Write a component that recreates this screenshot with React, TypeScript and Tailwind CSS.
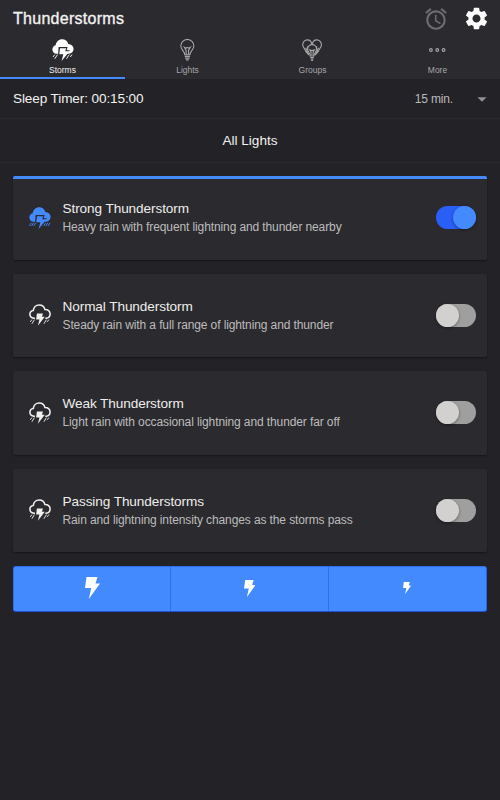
import { MdAlarm, MdArrowDropDown, MdSettings } from "react-icons/md";

type IconProps = { className?: string };

type Storm = {
  id: string;
  name: string;
  description: string;
  active: boolean;
};

const storms: Storm[] = [
  {
    id: "strong",
    name: "Strong Thunderstorm",
    description: "Heavy rain with frequent lightning and thunder nearby",
    active: true,
  },
  {
    id: "normal",
    name: "Normal Thunderstorm",
    description: "Steady rain with a full range of lightning and thunder",
    active: false,
  },
  {
    id: "weak",
    name: "Weak Thunderstorm",
    description: "Light rain with occasional lightning and thunder far off",
    active: false,
  },
  {
    id: "passing",
    name: "Passing Thunderstorms",
    description: "Rain and lightning intensity changes as the storms pass",
    active: false,
  },
];

function SolidStormIcon({ className, heavy }: IconProps & { heavy?: boolean }) {
  return (
    <svg aria-hidden="true" viewBox="0 0 24 24" className={className}>
      <path
        d="M5 16.200C2.300 16 .4 14 .4 11.500c0-2.300 1.500-4.100 3.600-4.600C4.400 3 7.400.2 11 .2c3.300 0 6 2.100 6.800 5.200 3.200.2 5.700 2.500 5.700 5.500 0 2.800-2.100 5-4.800 5.300z"
        fill="currentColor"
      />
      <path
        d="M7.200 8.800h9.800l-1 3.500h3.700L14 18.500h-3.500v-1H6.600z"
        fill="#2b2a2f"
      />
      <path
        d="M8.800 10.100h6.700l-1.100 3.300h4.900L10.400 24l2-7.300H7.900z"
        fill="currentColor"
      />
      {heavy ? (
        <path
          d="M2.600 17.200.4 20.700M5 17.200l-2.200 3.500M7.400 17.200l-2.200 3.500M18.200 17.200 16 20.700M20.600 17.200l-2.200 3.500M23 17.200l-2.200 3.500"
          stroke="currentColor"
          strokeWidth="1"
        />
      ) : (
        <path
          d="m3 17-1.800 2.600M6 17l-3 4.600M18.800 17l-3 4.600M21.800 17 20 19.600"
          stroke="currentColor"
          strokeWidth="1"
        />
      )}
    </svg>
  );
}

function OutlineStormIcon({ className }: IconProps) {
  return (
    <svg aria-hidden="true" viewBox="0 0 24 24" className={className}>
      <path
        d="M6.500 15.500H5.400C2.800 15.200 1 13.500 1 11.200c0-2.200 1.500-3.900 3.700-4.200C5 3.600 7.700 1 11 1c3.200 0 5.700 2 6.400 5 3.200-.1 5.600 2 5.600 4.800 0 2.500-1.800 4.400-4.400 4.700h-.8"
        fill="none"
        stroke="currentColor"
        strokeWidth="1.700"
      />
      <path
        d="M8.600 10.300h6.600l-1 3.500h3L9.700 23.700l1.700-6.900H7.800z"
        fill="currentColor"
      />
      <path
        d="m3.200 17-1.800 2.400M5.900 17l-2.700 4.500M19 17l-2.700 4.500M21.700 17l-1.800 2.400"
        stroke="currentColor"
        strokeWidth="1"
      />
    </svg>
  );
}

function BulbIcon({ className }: IconProps) {
  return (
    <svg
      aria-hidden="true"
      viewBox="0 0 16 24"
      className={className}
      fill="none"
      stroke="currentColor"
      strokeWidth="1.200"
    >
      <path d="M5.200 17.200c0-4-4.300-5.200-4.300-9.600a7.100 7.100 0 0 1 14.200 0c0 4.400-4.300 5.600-4.300 9.600z" />
      <path d="M6.700 17V12.500L4.800 9l1.600 1L8 9.200l1.600.8 1.600-1L9.300 12.500V17" />
      <path d="M5.200 19h5.600M5.500 20.900h5M6.500 22.800h3" />
    </svg>
  );
}

function GroupsIcon({ className }: IconProps) {
  return (
    <svg
      aria-hidden="true"
      viewBox="0 0 22 24"
      className={className}
      fill="none"
      stroke="currentColor"
      strokeWidth="1.200"
    >
      <path d="M11 6.200C10.300 2.600 8.200.9 5.800.9A5.100 5.100 0 0 0 .8 6.200c0 3.300 2.900 4.600 3.400 7.300l3.300 2.700" />
      <path d="M11 6.200c.7-3.600 2.800-5.300 5.200-5.300a5.100 5.100 0 0 1 5 5.300c0 3.300-2.900 4.600-3.400 7.300l-3.300 2.700" />
      <path d="M9 18.500c0-3.200-2.900-4.300-2.900-7.500a4.900 4.900 0 0 1 9.800 0c0 3.200-2.900 4.300-2.900 7.500z" />
      <path d="M9.900 18v-3.700L8.600 12l2.400.7 2.400-.7-1.300 2.300V18M4 9.500l2.100 5M6.100 8v3M18 9.500l-2.100 5M15.900 8v3M4.200 13.500l3.500 4M17.800 13.500l-3.500 4M9 20.200h4M9.400 21.800h3.200M10 23.300h2" />
    </svg>
  );
}

function MoreIcon({ className }: IconProps) {
  return (
    <svg
      aria-hidden="true"
      viewBox="0 0 18 24"
      className={className}
      fill="none"
      stroke="currentColor"
      strokeWidth="1.200"
    >
      <circle cx="2.100" cy="12" r="1.500" />
      <circle cx="9" cy="12" r="1.500" />
      <circle cx="15.900" cy="12" r="1.500" />
    </svg>
  );
}

function BoltIcon({ className }: IconProps) {
  return (
    <svg aria-hidden="true" viewBox="0 0 15 22" className={className}>
      <path d="M1.500 0h11l-2 6.500H15L3.800 22l2.400-11H0z" fill="currentColor" />
    </svg>
  );
}

function Toggle({ on }: { on: boolean }) {
  return (
    <button
      role="switch"
      aria-checked={on}
      className={
        on
          ? "flex h-[23px] w-10 justify-end rounded-full bg-[#295ff7]"
          : "flex h-[23px] w-10 justify-start rounded-full bg-[#a09f9f]"
      }
    >
      <span
        className={
          on
            ? "size-[23px] rounded-full bg-[#448aff] shadow-[0_1px_3px_rgba(0,0,0,0.4)]"
            : "size-[23px] rounded-full bg-[#d2d1cf] shadow-[0_1px_3px_rgba(0,0,0,0.4)]"
        }
      />
    </button>
  );
}

function StormCard({ storm }: { storm: Storm }) {
  return (
    <article
      className={
        storm.active
          ? "relative flex h-[83.500px] items-center overflow-hidden rounded-[2px] bg-[#2b2a2f] pr-[11px] pl-4 shadow-[0_1px_2px_rgba(0,0,0,0.4)] before:absolute before:inset-x-0 before:top-0 before:h-[3px] before:bg-[#448aff]"
          : "flex h-[83.500px] items-center rounded-[2px] bg-[#2b2a2f] pr-[11px] pl-4 shadow-[0_1px_2px_rgba(0,0,0,0.4)]"
      }
    >
      {storm.active ? (
        <SolidStormIcon heavy className="size-[22px] text-[#448aff]" />
      ) : (
        <OutlineStormIcon className="size-[22px] text-[#f0f0ee]" />
      )}
      <div className="ml-[11.500px] flex-1 pt-px">
        <h2 className="text-[13.600px] leading-[18px] tracking-[-0.090px] text-[#eeeeec]">
          {storm.name}
        </h2>
        <p className="text-xs leading-[18px] tracking-[-0.110px] text-[#bdbcbc]">
          {storm.description}
        </p>
      </div>
      <Toggle on={storm.active} />
    </article>
  );
}

function App() {
  return (
    <div className="min-h-screen bg-[#232226] font-['Liberation_Sans',Arial,sans-serif] text-[#f2f2f0]">
      <header className="bg-[#2b2a2f]">
        <div className="flex h-[37px] items-center justify-between pr-[10.500px] pl-[13px]">
          <h1 className="text-base tracking-[0.280px] [-webkit-text-stroke:0.35px_currentColor]">
            Thunderstorms
          </h1>
          <div className="flex items-center gap-[14px]">
            <MdAlarm className="size-[26px] text-[#6d6c6f]" />
            <MdSettings className="size-[27px] text-white" />
          </div>
        </div>
        <nav className="grid h-[42px] grid-cols-4 text-[8.500px] leading-[10px]">
          <button className="flex flex-col items-center border-b-2 border-[#448aff] pt-[2px]">
            <SolidStormIcon className="size-[22px] text-white" />
            <span className="mt-[3.500px]">Storms</span>
          </button>
          <button className="flex flex-col items-center pt-[2px] text-[#a7a6a8]">
            <BulbIcon className="h-[22px]" />
            <span className="mt-[3.500px]">Lights</span>
          </button>
          <button className="flex flex-col items-center pt-[2px] text-[#a7a6a8]">
            <GroupsIcon className="h-[22px]" />
            <span className="mt-[3.500px]">Groups</span>
          </button>
          <button className="flex flex-col items-center pt-[2px] text-[#a7a6a8]">
            <MoreIcon className="h-[22px]" />
            <span className="mt-[3.500px]">More</span>
          </button>
        </nav>
      </header>

      <div className="flex h-10 items-center justify-between border-b border-[#2b2a2e] pr-[7px] pl-[13px]">
        <span className="pt-px text-[13.600px] tracking-[-0.120px]">
          Sleep Timer: 00:15:00
        </span>
        <div className="flex items-center gap-[18px] text-[#bcbbbc]">
          <span className="text-xs tracking-[-0.150px]">15 min.</span>
          <MdArrowDropDown className="size-[22px] text-[#929194]" />
        </div>
      </div>
      <div className="flex h-11 items-center justify-center border-b border-[#2b2a2e] pt-px text-[13.600px]">
        All Lights
      </div>

      <main className="flex flex-col gap-[14px] px-[13px] pt-[13px]">
        {storms.map((storm) => (
          <StormCard key={storm.id} storm={storm} />
        ))}
        <div className="grid h-[46px] grid-cols-3 divide-x divide-[#2f6df5] overflow-hidden rounded-[3px] border border-t-[#2f6df5] border-r-[#295ff7] border-b-[#2250dc] border-l-[#2f6df5] bg-[#448aff] text-white">
          <button className="flex items-center justify-center pb-[2px]">
            <BoltIcon className="h-[22px]" />
          </button>
          <button className="flex items-center justify-center pb-[2px]">
            <BoltIcon className="h-[17px]" />
          </button>
          <button className="flex items-center justify-center pb-[2px]">
            <BoltIcon className="h-[12px]" />
          </button>
        </div>
      </main>
    </div>
  );
}

export default App;
